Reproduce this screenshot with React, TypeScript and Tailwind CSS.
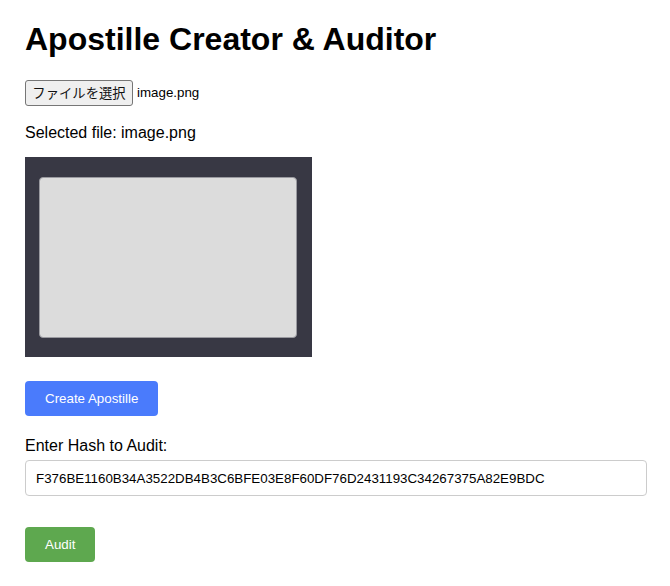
export default function App() {
  return (
    <div className="px-[25px] pt-[21px] font-['Liberation_Sans',Arial,sans-serif] text-black bg-white min-h-[586px]">
      <h1 className="text-[32px] leading-[37px] font-bold">Apostille Creator &amp; Auditor</h1>

      {/* file picker */}
      <div className="mt-[22px] flex items-center h-[26px]">
        <span className="h-[26px] w-[108px] flex items-center justify-center bg-[#efefef] border border-[#767676] rounded-[3px] text-[13.333px] font-['Noto_Sans_CJK_JP',sans-serif] text-[#111]">
          ファイルを選択
        </span>
        <span className="ml-[4px] text-[13.333px]">image.png</span>
      </div>

      <p className="mt-[18px] text-[16px] leading-[18px]">Selected file: image.png</p>

      {/* preview */}
      <div className="mt-[15px] w-[287px] h-[200px] bg-[#383844] pt-[20px] pb-[19px] pl-[14px] pr-[15px]">
        <div className="w-full h-full bg-[#dcdcdc] border border-[#9a9aa0] rounded-[4px]" />
      </div>

      <button className="mt-[24px] block h-[35px] px-[20px] bg-[#4a7bfc] text-white text-[13.333px] rounded-[4px]">
        Create Apostille
      </button>

      <label className="block mt-[20px] text-[16px] leading-[19px]">Enter Hash to Audit:</label>
      <input
        className="mt-[5px] block w-[622px] h-[36px] px-[10px] border border-[#cccccc] rounded-[4px] text-[13.333px] text-black outline-none"
        defaultValue="F376BE1160B34A3522DB4B3C6BFE03E8F60DF76D2431193C34267375A82E9BDC"
      />

      <button className="mt-[31px] block h-[35px] px-[20px] bg-[#5ea84f] text-white text-[13.333px] rounded-[4px]">
        Audit
      </button>
    </div>
  );
}
